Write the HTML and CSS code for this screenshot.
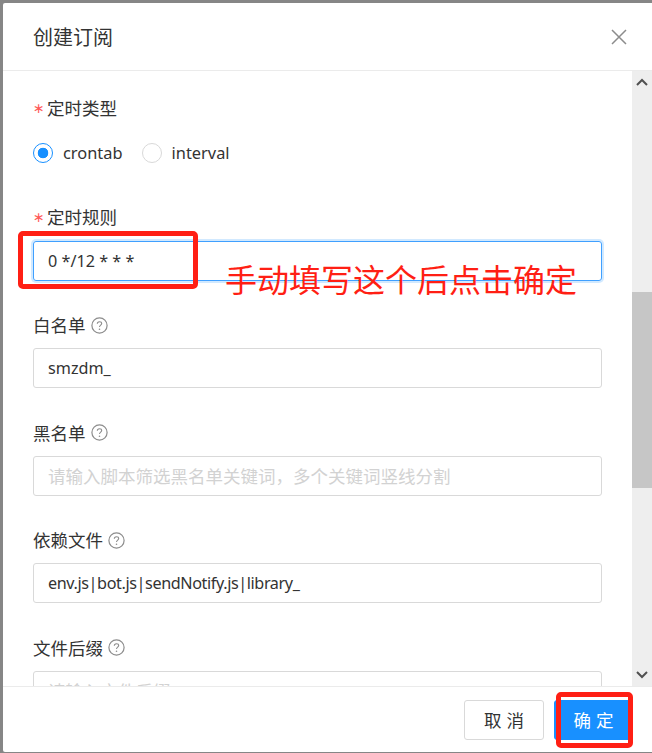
FILE: index.html
```html
<!DOCTYPE html>
<html lang="zh-CN">
<head>
    <meta charset="UTF-8">
    <meta name="viewport" content="width=device-width, initial-scale=1.0">
    <title>创建订阅</title>
    <link rel="stylesheet" href="styles.css">
</head>
<body>
    <div class="modal">
        <!-- Header -->
        <div class="modal-header">
            <span class="modal-title">创建订阅</span>
            <svg class="close-icon" width="16" height="16" viewBox="0 0 16 16"><path d="M1 1L15 15M15 1L1 15" stroke="#8c8c8c" stroke-width="1.5" fill="none"/></svg>
        </div>

        <!-- Form -->
        <div class="modal-middle">
            <div class="modal-body">
                <div class="field field-type">
                    <div class="label"><span class="required">∗</span>定时类型</div>
                    <div class="radio-group">
                        <span class="radio radio-checked"></span><span class="radio-text">crontab</span>
                        <span class="radio"></span><span class="radio-text">interval</span>
                    </div>
                </div>
                <div class="field field-rule">
                    <div class="label"><span class="required">∗</span>定时规则</div>
                    <div class="input input-focus">0 */12 * * *</div>
                </div>
                <div class="field">
                    <div class="label">白名单<svg class="help" viewBox="0 0 17 17"><use href="#help"/></svg></div>
                    <div class="input">smzdm_</div>
                </div>
                <div class="field">
                    <div class="label">黑名单<svg class="help" viewBox="0 0 17 17"><use href="#help"/></svg></div>
                    <div class="input input-empty">请输入脚本筛选黑名单关键词，多个关键词竖线分割</div>
                </div>
                <div class="field">
                    <div class="label">依赖文件<svg class="help" viewBox="0 0 17 17"><use href="#help"/></svg></div>
                    <div class="input input-tight">env.js|bot.js|sendNotify.js|library_</div>
                </div>
                <div class="field">
                    <div class="label">文件后缀<svg class="help" viewBox="0 0 17 17"><use href="#help"/></svg></div>
                    <div class="input input-empty">请输入文件后缀</div>
                </div>
            </div>
            <div class="scrollbar">
                <svg class="arrow" width="12" height="8" viewBox="0 0 12 8"><path d="M1 7L6 2L11 7" stroke="#505050" stroke-width="2" fill="none"/></svg>
                <div class="thumb"></div>
                <svg class="arrow arrow-down" width="12" height="8" viewBox="0 0 12 8"><path d="M1 1L6 6L11 1" stroke="#505050" stroke-width="2" fill="none"/></svg>
            </div>
        </div>

        <!-- Footer -->
        <div class="modal-footer">
            <button class="btn">取消</button>
            <button class="btn btn-primary">确定</button>
        </div>
    </div>

    <!-- Red annotations on top of the screenshot -->
    <div class="mark mark-input"></div>
    <div class="mark mark-button"></div>
    <div class="note">手动填写这个后点击确定</div>

    <svg width="0" height="0" class="defs">
        <symbol id="help" viewBox="0 0 17 17">
            <circle cx="8.5" cy="8.5" r="7.6" stroke="#8c8c8c" stroke-width="1.2" fill="none"/>
            <path d="M6.3 6.8C6.3 5.5 7.3 4.7 8.5 4.7C9.8 4.7 10.7 5.5 10.7 6.6C10.7 8.1 8.5 8.2 8.5 10" stroke="#8c8c8c" stroke-width="1.1" fill="none"/>
            <circle cx="8.5" cy="12.2" r="0.8" fill="#8c8c8c"/>
        </symbol>
    </svg>
</body>
</html>
```

FILE: styles.css
```css
/* General Styles */
body {
    margin: 0;
    height: 753px;
    overflow: hidden;
    background-color: #868686;
    font-family: "Noto Sans", "Noto Sans CJK SC", sans-serif;
    color: #333;
}

.defs {
    position: absolute;
}

/* Modal */
.modal {
    display: flex;
    flex-direction: column;
    height: 749px;
    margin: 3px 0 0 3px;
    background-color: #fff;
    border-radius: 2px 0 0 2px;
}

.modal-header {
    display: flex;
    align-items: center;
    justify-content: space-between;
    height: 67px;
    padding: 0 25px 0 30px;
    border-bottom: 1px solid #ebebeb;
    flex-shrink: 0;
}

.modal-title {
    font-size: 20px;
    color: #333;
}

.close-icon {
    display: block;
}

.modal-middle {
    display: flex;
    flex: 1;
    min-height: 0;
}

.modal-body {
    flex: 1;
    min-width: 0;
    padding: 22px 30px 0;
    overflow: hidden;
}

/* Fields */
.field {
    margin-bottom: 29.67px;
}

.field-type {
    margin-bottom: 36px;
}

.field-rule {
    margin-bottom: 29px;
}

.label {
    display: flex;
    align-items: center;
    height: 30px;
    margin-bottom: 8px;
    font-size: 17.5px;
    line-height: 30px;
    color: #333;
}

.field-rule .label {
    margin-bottom: 9px;
}

.required {
    width: 14px;
    color: #ff5a5a;
    font-family: "DejaVu Sans", sans-serif;
    font-size: 14px;
}

.help {
    width: 17px;
    height: 17px;
    margin-left: 5px;
}

.input {
    box-sizing: border-box;
    height: 40px;
    padding: 0 14px;
    border: 1px solid #d9d9d9;
    border-radius: 3px;
    font-size: 16.2px;
    line-height: 39px;
    color: #333;
    white-space: nowrap;
    overflow: hidden;
}

.input-focus {
    border-color: #40a0ff;
    box-shadow: 0 0 0 2px rgba(24, 144, 255, 0.2);
}

.input-tight {
    letter-spacing: -0.4px;
}

.input-empty {
    font-size: 17.5px;
    line-height: 38px;
    color: #d2d2d2;
}

/* Radios */
.radio-group {
    display: flex;
    align-items: center;
    height: 28px;
    margin-top: 15px;
}

.radio {
    box-sizing: border-box;
    width: 20px;
    height: 20px;
    margin-top: 1px;
    margin-right: 10px;
    border: 1px solid #d9d9d9;
    border-radius: 50%;
}

.radio-checked {
    border-color: #1890ff;
    background: radial-gradient(circle, #1890ff 0 5px, #fff 5.6px);
}

.radio-text {
    margin-right: 19px;
    font-size: 16.4px;
}

/* Scrollbar */
.scrollbar {
    position: relative;
    width: 20px;
    background-color: #eee;
    flex-shrink: 0;
}

.arrow {
    display: block;
    margin: 7px auto 0;
}

.arrow-down {
    position: absolute;
    bottom: 7px;
    left: 4px;
}

.thumb {
    height: 196px;
    margin-top: 206px;
    background-color: #c6c6c6;
}

/* Footer */
.modal-footer {
    display: flex;
    align-items: center;
    justify-content: flex-end;
    gap: 10px;
    height: 65px;
    padding-right: 19px;
    border-top: 1px solid #ebebeb;
    flex-shrink: 0;
}

.btn {
    width: 80px;
    height: 40px;
    padding: 0;
    border: 1px solid #d9d9d9;
    border-radius: 3px;
    background-color: #fff;
    font-family: inherit;
    font-size: 17.5px;
    letter-spacing: 5px;
    text-indent: 5px;
    color: #333;
}

.btn-primary {
    width: 79px;
    border-color: #1890ff;
    background-color: #1890ff;
    color: #fff;
}

/* Annotations */
.mark {
    position: absolute;
    box-sizing: border-box;
    border: 5px solid #ff1f14;
    border-radius: 5px;
}

.mark-input {
    left: 18px;
    top: 231px;
    width: 180px;
    height: 58px;
}

.mark-button {
    left: 556px;
    top: 692px;
    width: 77px;
    height: 56px;
}

.note {
    position: absolute;
    left: 225px;
    top: 258px;
    font-size: 32px;
    line-height: 44px;
    color: #ff1f14;
    white-space: nowrap;
}
```
